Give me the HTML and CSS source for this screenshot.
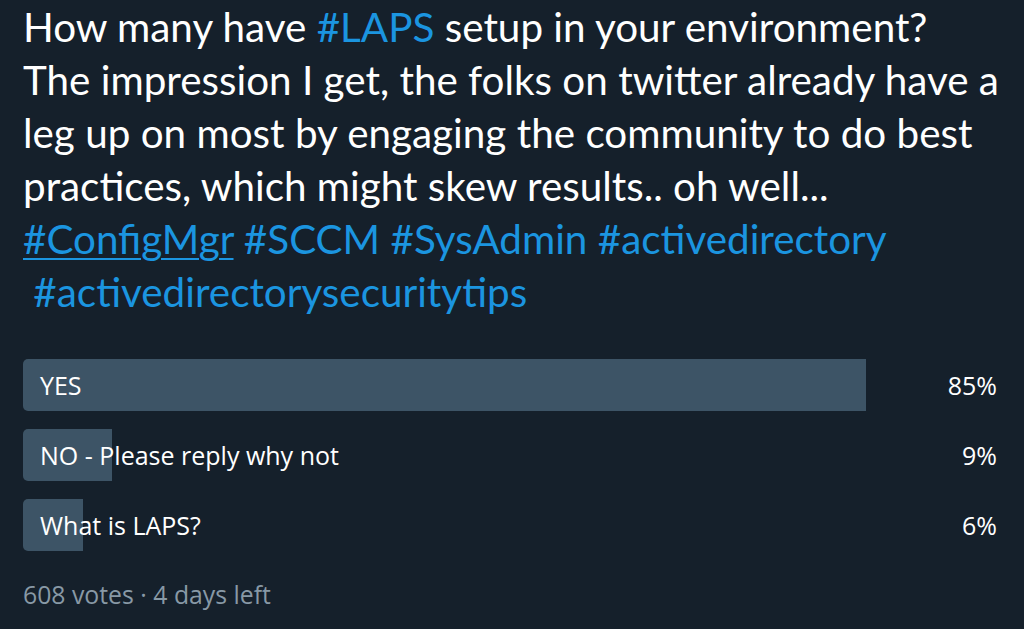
FILE: index.html
```html
<!DOCTYPE html>
<html>
<head>
<meta charset="utf-8">
<link rel="stylesheet" href="styles.css">
</head>
<body>
<div class="tweet">
  <p class="text">How many have <span class="tag">#LAPS</span> setup in your environment?<br>The impression I get, the folks on twitter already have a<br>leg up on most by engaging the community to do best<br>practices, which might skew results.. oh well...<br><a class="tag hover" href="#">#ConfigMgr</a> <span class="tag">#SCCM</span> <span class="tag">#SysAdmin</span> <span class="tag">#activedirectory</span><br>&nbsp;<span class="tag">#activedirectorysecuritytips</span></p>
  <div class="poll">
    <div class="row">
      <div class="bar" style="width:85%"></div>
      <span class="label">YES</span>
      <span class="pct">85%</span>
    </div>
    <div class="row">
      <div class="bar" style="width:9%"></div>
      <span class="label">NO - Please reply why not</span>
      <span class="pct">9%</span>
    </div>
    <div class="row">
      <div class="bar" style="width:6%"></div>
      <span class="label">What is LAPS?</span>
      <span class="pct">6%</span>
    </div>
  </div>
  <div class="meta">608 votes · 4 days left</div>
</div>
</body>
</html>
```
FILE: styles.css
```css
html, body {
  margin: 0;
  padding: 0;
  background: #15202b;
}
body {
  width: 1024px;
  height: 629px;
  overflow: hidden;
  font-family: Lato, "Open Sans", sans-serif;
  color: #ffffff;
}
.tweet {
  padding: 0 9px 0 23px;
}
.text {
  margin: 0;
  font-size: 40.4px;
  line-height: 53px;
  white-space: nowrap;
}
.tag {
  color: #1b95e0;
  text-decoration: none;
}
.hover {
  text-decoration: underline;
  text-decoration-thickness: 2px;
  text-underline-offset: 4px;
}
.poll {
  margin-top: 41px;
  display: flex;
  flex-direction: column;
  gap: 18px;
  font-family: "Open Sans", Lato, sans-serif;
}
.row {
  position: relative;
  height: 52px;
  display: flex;
  align-items: center;
  justify-content: space-between;
  padding: 0 18px 0 17px;
  font-size: 25px;
}
.bar {
  position: absolute;
  left: 0;
  top: 0;
  bottom: 0;
  background: #3d5466;
  border-radius: 5px 0 0 5px;
}
.label, .pct {
  position: relative;
}
.meta {
  margin-top: 26px;
  font-family: "Open Sans", Lato, sans-serif;
  font-size: 24.8px;
  color: #8899a6;
}
```
